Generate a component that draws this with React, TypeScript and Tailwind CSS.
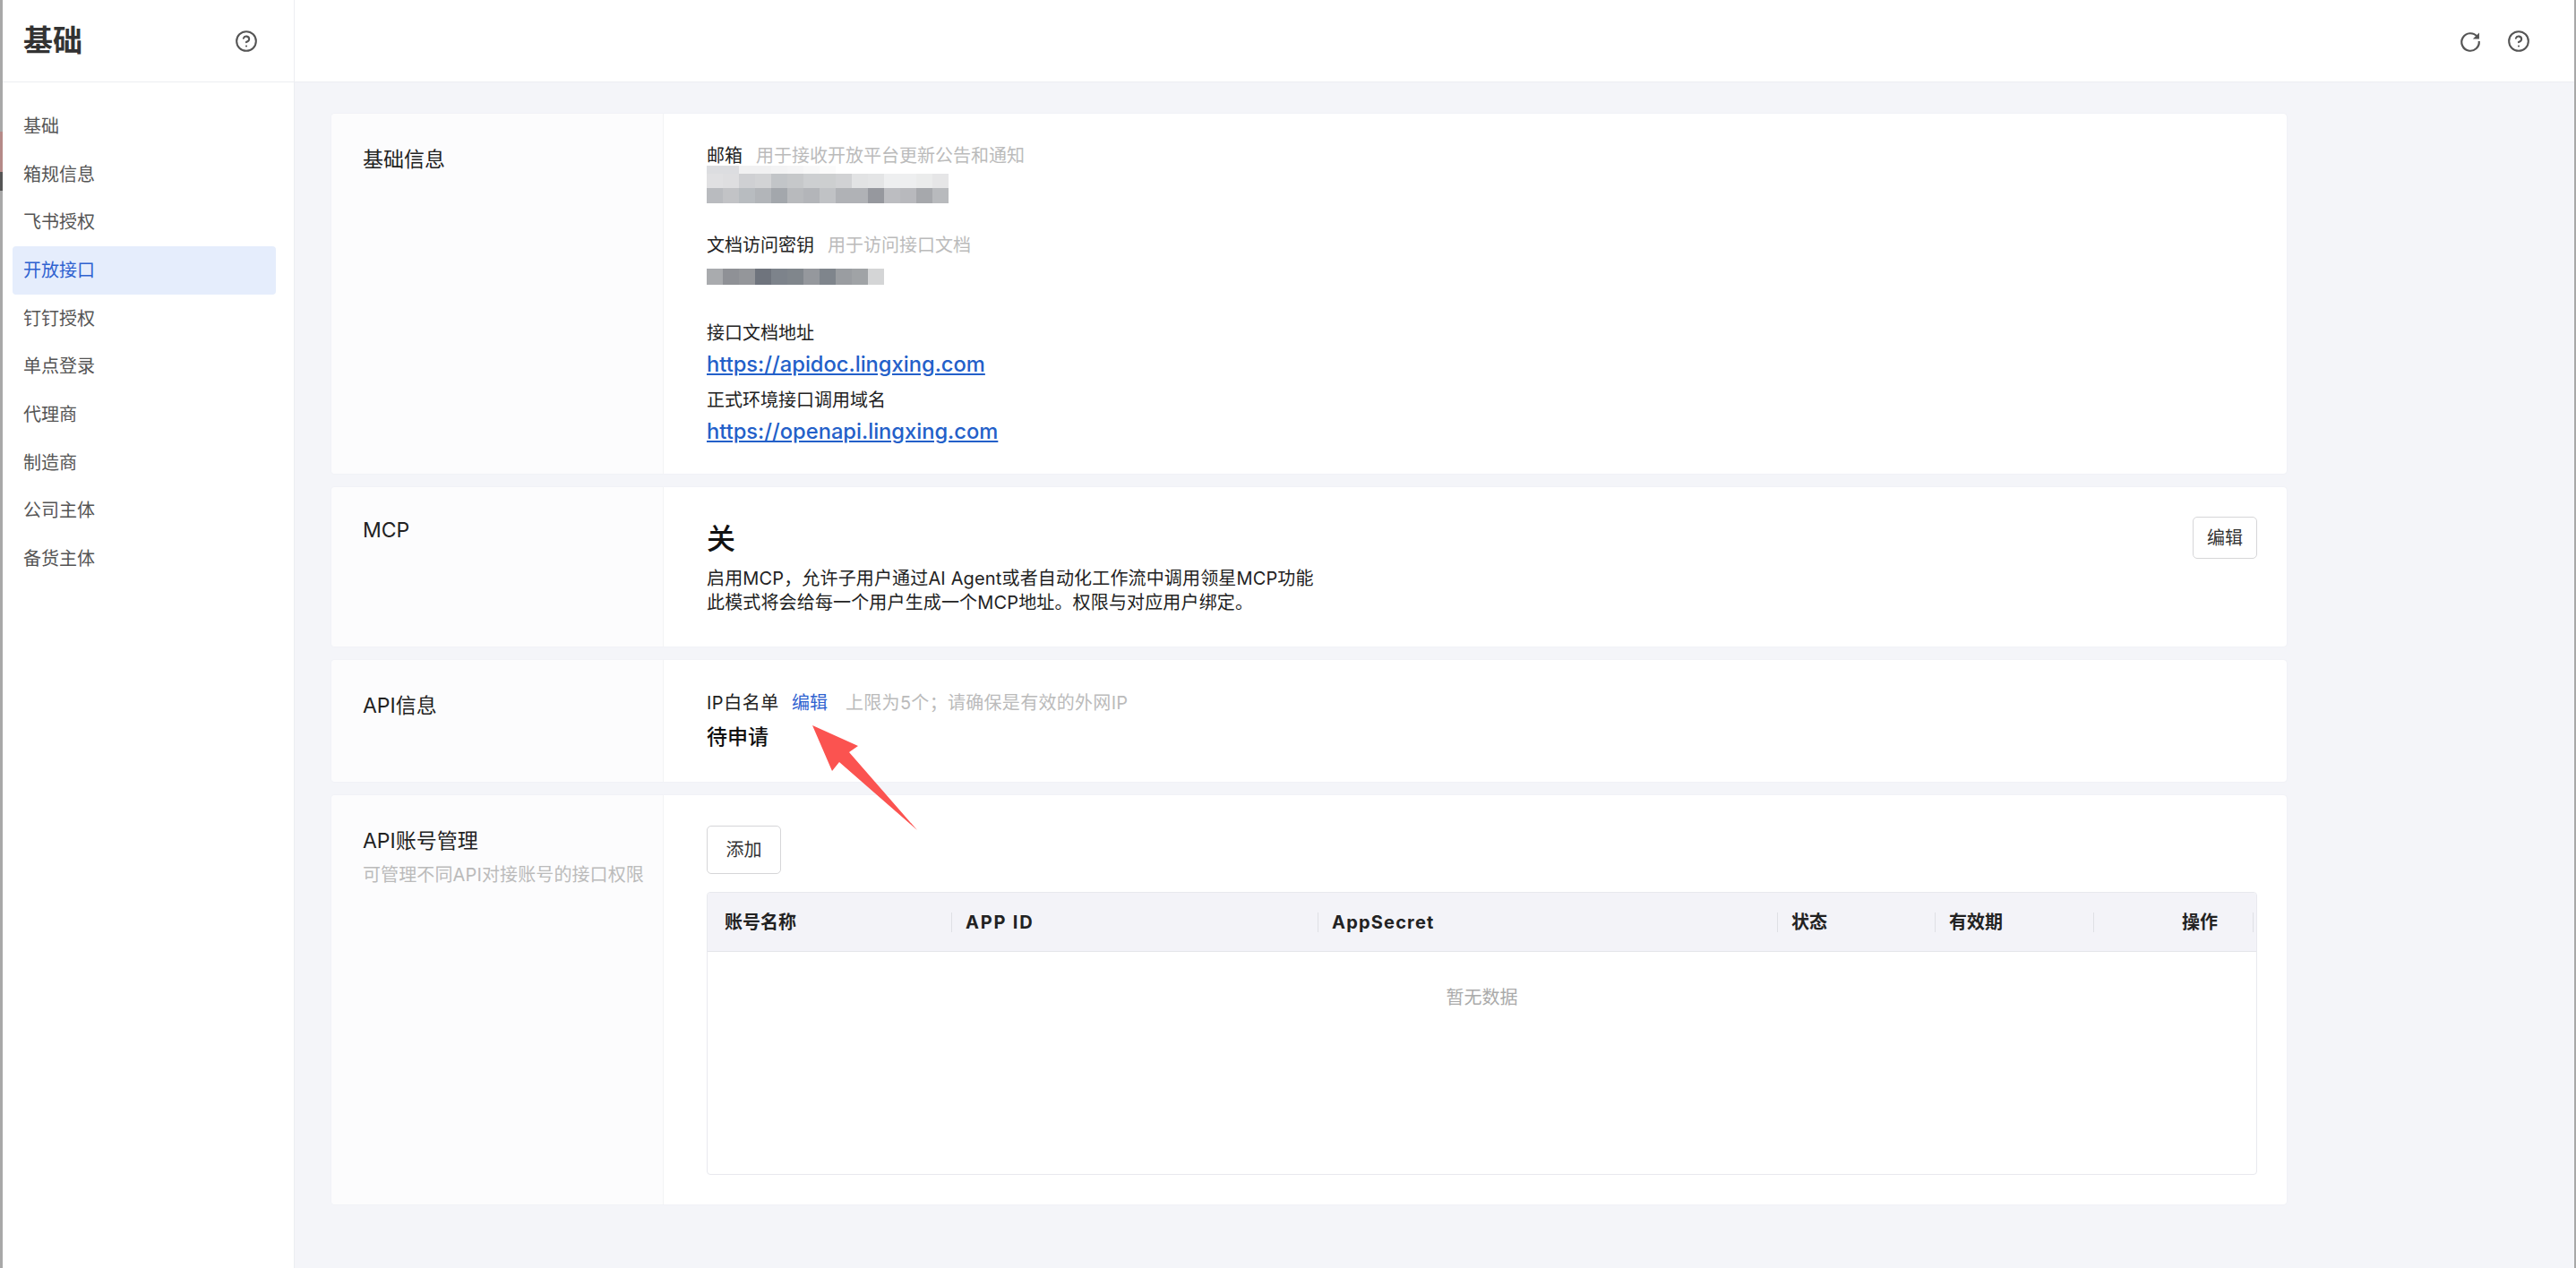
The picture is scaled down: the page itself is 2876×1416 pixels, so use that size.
import { CircleHelp } from 'lucide-react'

const navItems = ['基础', '箱规信息', '飞书授权', '开放接口', '钉钉授权', '单点登录', '代理商', '制造商', '公司主体', '备货主体']

const mosaicTop = [
  'bg-[#dcdde0]', 'bg-[#dcdde0]', 'bg-[#f1f1f2]', 'bg-[#f1f1f2]', 'bg-[#f3f3f4]', 'bg-[#f5f5f6]', 'bg-[#f8f8f8]', 'bg-[#fbfbfb]',
]
const mosaicMid = [
  'bg-[#e0e0e2]', 'bg-[#dedee0]', 'bg-[#cfd0d3]', 'bg-[#d2d3d5]', 'bg-[#c2c5c8]', 'bg-[#c6c8ca]', 'bg-[#cdcfd1]', 'bg-[#cdcfd0]',
  'bg-[#d1d2d4]', 'bg-[#e2e3e4]', 'bg-[#e4e5e6]', 'bg-[#eeeff0]', 'bg-[#eeeff0]', 'bg-[#ebecec]', 'bg-[#e6e6e7]',
]
const mosaicLow = [
  'bg-[#b9bbbf]', 'bg-[#c2c3c6]', 'bg-[#b8bcc0]', 'bg-[#b2b5b9]', 'bg-[#a3a7ac]', 'bg-[#b8babd]', 'bg-[#b3b5b9]', 'bg-[#c0c2c5]',
  'bg-[#b0b2b6]', 'bg-[#b0b2b6]', 'bg-[#96989e]', 'bg-[#bcbdc1]', 'bg-[#b8b9bd]', 'bg-[#a6a8ac]', 'bg-[#b8babd]',
]
const mosaicKey = [
  'bg-[#a9abae]', 'bg-[#8f9196]', 'bg-[#94969a]', 'bg-[#6f747d]', 'bg-[#7d838b]', 'bg-[#80868c]', 'bg-[#95989d]', 'bg-[#7f858c]',
  'bg-[#9a9da1]', 'bg-[#a0a3a6]', 'bg-[#d4d5d6]',
]

const columns = [
  { label: '账号名称', cell: 'w-[273px] pl-[19px]', text: '' },
  { label: 'APP ID', cell: 'w-[409px] pl-[15px]', text: 'tracking-[1.8px]' },
  { label: 'AppSecret', cell: 'w-[513px] pl-[15px]', text: 'tracking-[1.2px]' },
  { label: '状态', cell: 'w-[176px] pl-[15px]', text: '' },
  { label: '有效期', cell: 'w-[177px] pl-[15px]', text: '' },
]

function Mosaic({ cells, height }: { cells: string[]; height: string }) {
  return (
    <div className={`flex ${height}`}>
      {cells.map((c, i) => <div key={i} className={`w-[18px] ${c}`} />)}
    </div>
  )
}

function RefreshIcon() {
  return (
    <svg width="26" height="26" viewBox="0 0 24 24" fill="none" className="text-[#555]">
      <path d="M19 7.2A9 9 0 1 0 21 12" stroke="currentColor" strokeWidth="2" />
      <path d="M21.2 3.2v6.6h-6.6z" fill="currentColor" />
    </svg>
  )
}

interface SectionCardProps {
  title: string
  sub?: string
  titlePad?: string
  className: string
  children: React.ReactNode
}

function SectionCard({ title, sub, titlePad = 'pt-[34px]', className, children }: SectionCardProps) {
  return (
    <section className={`flex rounded-[4px] bg-white shadow-[0_0_2px_rgba(30,40,80,0.06)] ${className}`}>
      <div className={`w-[371px] shrink-0 rounded-l-[4px] border-r border-[#f2f3f5] bg-[#fcfcfd] pl-[35px] ${titlePad}`}>
        <div className="text-[23px] leading-[34px] text-[#222]">{title}</div>
        {sub && <div className="mt-[6px] whitespace-nowrap text-[20px] tracking-[0.12px] leading-[30px] text-[#bbb]">{sub}</div>}
      </div>
      <div className="relative min-w-0 flex-1 pl-[48px]">{children}</div>
    </section>
  )
}

export default function App() {
  return (
    <div className="relative flex h-[1416px] w-[2876px] overflow-hidden bg-[#f4f5f9] font-['Inter','Noto_Sans_CJK_SC',sans-serif] text-[20px] text-[#222]">
      <div className="flex w-[3px] shrink-0 flex-col bg-[#a8a8a8]">
        <div className="mt-[147px] h-[45px] bg-[#b58a88]" />
        <div className="h-[21px] bg-[#555]" />
      </div>

      <aside className="w-[326px] shrink-0 border-r border-[#eceef2] bg-white">
        <div className="flex h-[92px] items-center justify-between border-b border-[#eceef2] pl-[23px] pr-[40px]">
          <h1 className="text-[33px] font-semibold leading-none text-[#333]">基础</h1>
          <CircleHelp size={26} strokeWidth={1.9} className="text-[#555]" />
        </div>
        <nav className="pl-[11px] pr-[20px] pt-[22px]">
          {navItems.map(item => (
            <div
              key={item}
              className={`flex h-[53.7px] items-center rounded-[4px] pl-[12px] ${item === '开放接口' ? 'bg-[#e5edfc] text-[#2f62d0]' : 'text-[#555]'}`}
            >
              {item}
            </div>
          ))}
        </nav>
      </aside>

      <main className="min-w-0 flex-1">
        <header className="flex h-[92px] items-center justify-end gap-[28px] border-b border-[#eceef2] bg-white pr-[49px]">
          <RefreshIcon />
          <CircleHelp size={26} strokeWidth={1.9} className="text-[#555]" />
        </header>

        <div className="flex w-[2224px] flex-col gap-[15px] pl-[41px] pt-[35px]">
          <SectionCard title="基础信息" className="h-[402px]">
            <div className="pt-[32px]">
              <div className="flex gap-[15px] leading-[30px]">
                <span>邮箱</span>
                <span className="text-[#bbb]">用于接收开放平台更新公告和通知</span>
              </div>
              <div className="-mt-[4px]">
                <Mosaic cells={mosaicTop} height="h-[9px]" />
                <Mosaic cells={mosaicMid} height="h-[16px]" />
                <Mosaic cells={mosaicLow} height="h-[17px]" />
              </div>
              <div className="mt-[32px] flex gap-[15px] leading-[30px]">
                <span>文档访问密钥</span>
                <span className="text-[#bbb]">用于访问接口文档</span>
              </div>
              <div className="mt-[11px]">
                <Mosaic cells={mosaicKey} height="h-[18px]" />
              </div>
              <div className="mt-[39px] leading-[30px]">接口文档地址</div>
              <a className="mt-[5px] block w-fit text-[23.7px] font-medium leading-[30px] text-[#2360c9] underline">https://apidoc.lingxing.com</a>
              <div className="mt-[10px] leading-[30px]">正式环境接口调用域名</div>
              <a className="mt-[5px] block w-fit text-[23.7px] font-medium leading-[30px] text-[#2360c9] underline">https://openapi.lingxing.com</a>
            </div>
          </SectionCard>

          <SectionCard title="MCP" titlePad="pt-[31px]" className="h-[178px]">
            <div className="flex items-start justify-between pr-[33px] pt-[33px]">
              <div>
                <div className="text-[32px] font-medium leading-[50px] text-[#111]">关</div>
                <div className="mt-[6px] tracking-[0.15px] leading-[27px]">
                  <div>启用MCP，允许子用户通过AI Agent或者自动化工作流中调用领星MCP功能</div>
                  <div>此模式将会给每一个用户生成一个MCP地址。权限与对应用户绑定。</div>
                </div>
              </div>
              <button className="h-[47px] w-[72px] rounded-[5px] border border-[#d6d6d8] bg-white text-[#333]">编辑</button>
            </div>
          </SectionCard>

          <SectionCard title="API信息" className="h-[136px]">
            <div className="pt-[33px]">
              <div className="flex items-center leading-[30px]">
                <span className="w-[95px] tracking-[0.5px]">IP白名单</span>
                <span className="w-[60px] text-[#2f62d0]">编辑</span>
                <span className="tracking-[0.3px] text-[#bbb]">上限为5个；请确保是有效的外网IP</span>
              </div>
              <div className="mt-[6px] text-[23px] font-medium leading-[34px] text-[#111]">待申请</div>
            </div>
          </SectionCard>

          <SectionCard title="API账号管理" sub="可管理不同API对接账号的接口权限" className="h-[457px]">
            <div className="pr-[33px] pt-[34px]">
              <button className="h-[54px] w-[83px] rounded-[5px] border border-[#d6d6d8] bg-white text-[#333]">添加</button>
              <div className="mt-[20px] flex h-[316px] flex-col overflow-hidden rounded-[4px] border border-[#e8e9ee]">
                <div className="flex h-[66px] shrink-0 items-center border-b border-[#e4e5ea] bg-[#f3f3f8] font-bold text-[#222]">
                  {columns.map(col => (
                    <div key={col.label} className={`flex shrink-0 items-center justify-between ${col.cell}`}>
                      <span className={col.text}>{col.label}</span>
                      <span className="h-[22px] w-px bg-[#dfe0e5]" />
                    </div>
                  ))}
                  <div className="flex w-[178px] shrink-0 items-center justify-end">
                    <span className="mr-[39px]">操作</span>
                    <span className="h-[22px] w-px bg-[#dfe0e5]" />
                  </div>
                </div>
                <div className="flex h-[102px] items-center justify-center text-[#aaa]">暂无数据</div>
              </div>
            </div>
          </SectionCard>
        </div>
      </main>

      <div className="w-[2px] shrink-0 bg-[#a8a8a8]" />

      <svg className="absolute left-[900px] top-[804px]" width="130" height="128" viewBox="900 804 130 128">
        <path d="M907 810L958 833L948 840L1024 927L937 851L929 861Z" fill="#fb5350" />
      </svg>
    </div>
  )
}
